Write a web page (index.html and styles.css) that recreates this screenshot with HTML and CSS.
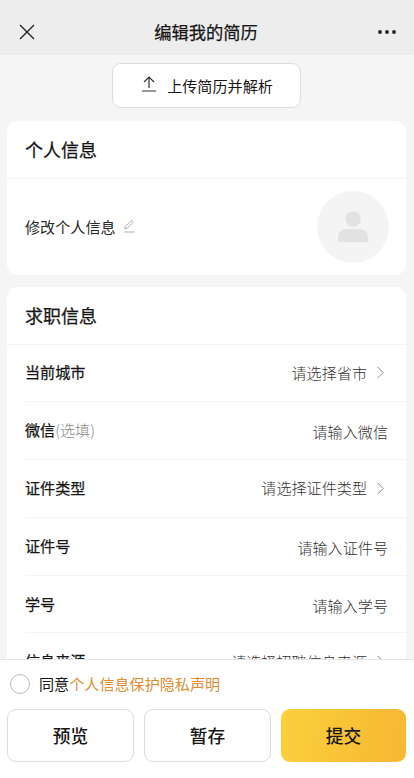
FILE: index.html
```html
<!DOCTYPE html>
<html lang="zh-CN">
<head>
<meta charset="utf-8">
<title>编辑我的简历</title>
<link rel="stylesheet" href="styles.css">
</head>
<body>
<div class="page">
  <header class="navbar">
    <svg class="close" viewBox="0 0 16 16"><path d="M1 1 15 15M15 1 1 15"/></svg>
    <h1>编辑我的简历</h1>
    <svg class="more" viewBox="0 0 18 4"><circle cx="2" cy="2" r="1.9"/><circle cx="9" cy="2" r="1.9"/><circle cx="16" cy="2" r="1.9"/></svg>
  </header>
  <main class="content">
    <button class="upload">
      <svg viewBox="0 0 14 16"><path d="M7 12V1.2M2 6 7 1 12 6M0 15h14"/></svg>
      <span>上传简历并解析</span>
    </button>
    <section class="card">
      <h2>个人信息</h2>
      <div class="profile">
        <span>修改个人信息</span>
        <svg class="edit" viewBox="0 0 11 13"><path d="M.7 8.8 1.3 6.4 7 .9Q7.5.5 8 .9L8.8 1.7Q9.3 2.2 8.8 2.7L3.1 8.2ZM.5 12H10.5"/></svg>
        <div class="avatar">
          <svg viewBox="0 0 30 31"><circle cx="15" cy="8" r="7.7"/><path d="M0 31V26a8 8 0 0 1 8-8h14a8 8 0 0 1 8 8v5Z"/></svg>
        </div>
      </div>
    </section>
    <section class="card">
      <h2>求职信息</h2>
      <div class="row"><span class="label">当前城市</span><span class="value">请选择省市</span><svg class="chevron" viewBox="0 0 7 13"><path d="M.5.8 6.2 6.5.5 12.2"/></svg></div>
      <div class="row"><span class="label">微信<small>(选填)</small></span><span class="value input">请输入微信</span></div>
      <div class="row"><span class="label">证件类型</span><span class="value">请选择证件类型</span><svg class="chevron" viewBox="0 0 7 13"><path d="M.5.8 6.2 6.5.5 12.2"/></svg></div>
      <div class="row"><span class="label">证件号</span><span class="value input">请输入证件号</span></div>
      <div class="row"><span class="label">学号</span><span class="value input">请输入学号</span></div>
      <div class="row"><span class="label">信息来源</span><span class="value">请选择招聘信息来源</span><svg class="chevron" viewBox="0 0 7 13"><path d="M.5.8 6.2 6.5.5 12.2"/></svg></div>
    </section>
  </main>
  <footer class="footer">
    <div class="agree"><i class="radio"></i><span>同意</span><a>个人信息保护隐私声明</a></div>
    <div class="actions">
      <button>预览</button>
      <button>暂存</button>
      <button class="submit">提交</button>
    </div>
  </footer>
</div>
</body>
</html>
```
FILE: styles.css
```css
* { box-sizing: border-box; }
body {
  margin: 0;
  font-family: "Noto Sans CJK SC", sans-serif;
  font-size: 15.1px;
  color: #161616;
}
h1, h2 { margin: 0; font-weight: 400; -webkit-text-stroke: .25px; }
svg { display: block; flex: none; fill: none; }
.page { height: 778px; display: flex; flex-direction: column; overflow: hidden; background: #f5f5f5; }
.navbar {
  height: 55px;
  flex: none;
  display: grid;
  grid-template-columns: 1fr auto 1fr;
  align-items: center;
  padding: 9px 18px 0 19px;
  background: #ededed;
}
.navbar h1 { margin: -1px 3px 0 0; font-size: 17.3px; line-height: 26px; }
.close { width: 16px; height: 16px; stroke: #222; stroke-width: 1.4; }
.more { width: 18px; height: 4px; justify-self: end; fill: #222; }
.content { flex: 1; min-height: 0; overflow: hidden; padding: 8px 8px 0 7px; }
button {
  padding: 0;
  font: inherit;
  color: inherit;
  background: #fff;
  border: 1px solid #dcdcdc;
}
.upload {
  width: 189px;
  height: 45px;
  margin: 0 auto 13px;
  display: flex;
  align-items: center;
  justify-content: center;
  gap: 11px;
  padding: 0 0 2px 2px;
  border-radius: 9px;
}
.upload svg { width: 14px; height: 16px; stroke: #333; stroke-width: 1.2; margin-top: -1px; }
.card { background: #fff; border-radius: 11px; margin-bottom: 12px; overflow: hidden; }
.card h2 {
  height: 57.5px;
  padding-left: 18px;
  font-size: 18px;
  line-height: 56px;
  border-bottom: 1px solid #f4f4f4;
}
.profile { height: 96.5px; display: flex; align-items: center; padding: 0 17px 0 18px; }
.profile span { font-weight: 400; color: #2a2a2a; margin-top: -2px; }
.edit { width: 11px; height: 13px; margin-left: 8px; stroke: #999; stroke-width: .8; }
.avatar {
  width: 72px;
  height: 72px;
  margin-left: auto;
  display: flex;
  align-items: center;
  justify-content: center;
  border-radius: 50%;
  background: #f4f4f4;
}
.avatar svg { width: 30px; height: 31px; fill: #e2e2e2; }
.row {
  height: 57.8px;
  margin-left: 18px;
  padding-right: 22px;
  display: flex;
  align-items: center;
  border-bottom: 1px solid #f4f4f4;
}
.label { padding-bottom: 3px; -webkit-text-stroke: .25px; }
.label small { font-size: inherit; font-weight: 300; color: #888; -webkit-text-stroke: 0; }
.value { margin-left: auto; padding-bottom: 2px; font-weight: 300; color: #333; }
.input { margin-right: -4px; padding: 1px 0 0; }
.chevron { width: 7px; height: 13px; margin-left: 10px; stroke: #888; stroke-width: 1; }
.footer { height: 119px; flex: none; padding: 0 8px 0 7px; background: #fff; border-top: 1px solid #e4e4e4; }
.agree { height: 49px; display: flex; align-items: center; padding: 0 0 2px 3px; }
.agree span, .agree a { margin-top: -2px; }
.agree a { color: #de8e32; }
.radio { width: 20px; height: 20px; margin-right: 9px; border: 1px solid #bbb; border-radius: 50%; }
.actions { display: grid; grid-template-columns: 127px 127px 125px; gap: 10px; }
.actions button { height: 53px; padding-bottom: 2px; border-radius: 9px; font-size: 17.7px; font-weight: 500; }
.actions .submit { border: 0; background: linear-gradient(100deg, #fad03b, #f7b733); }
```
